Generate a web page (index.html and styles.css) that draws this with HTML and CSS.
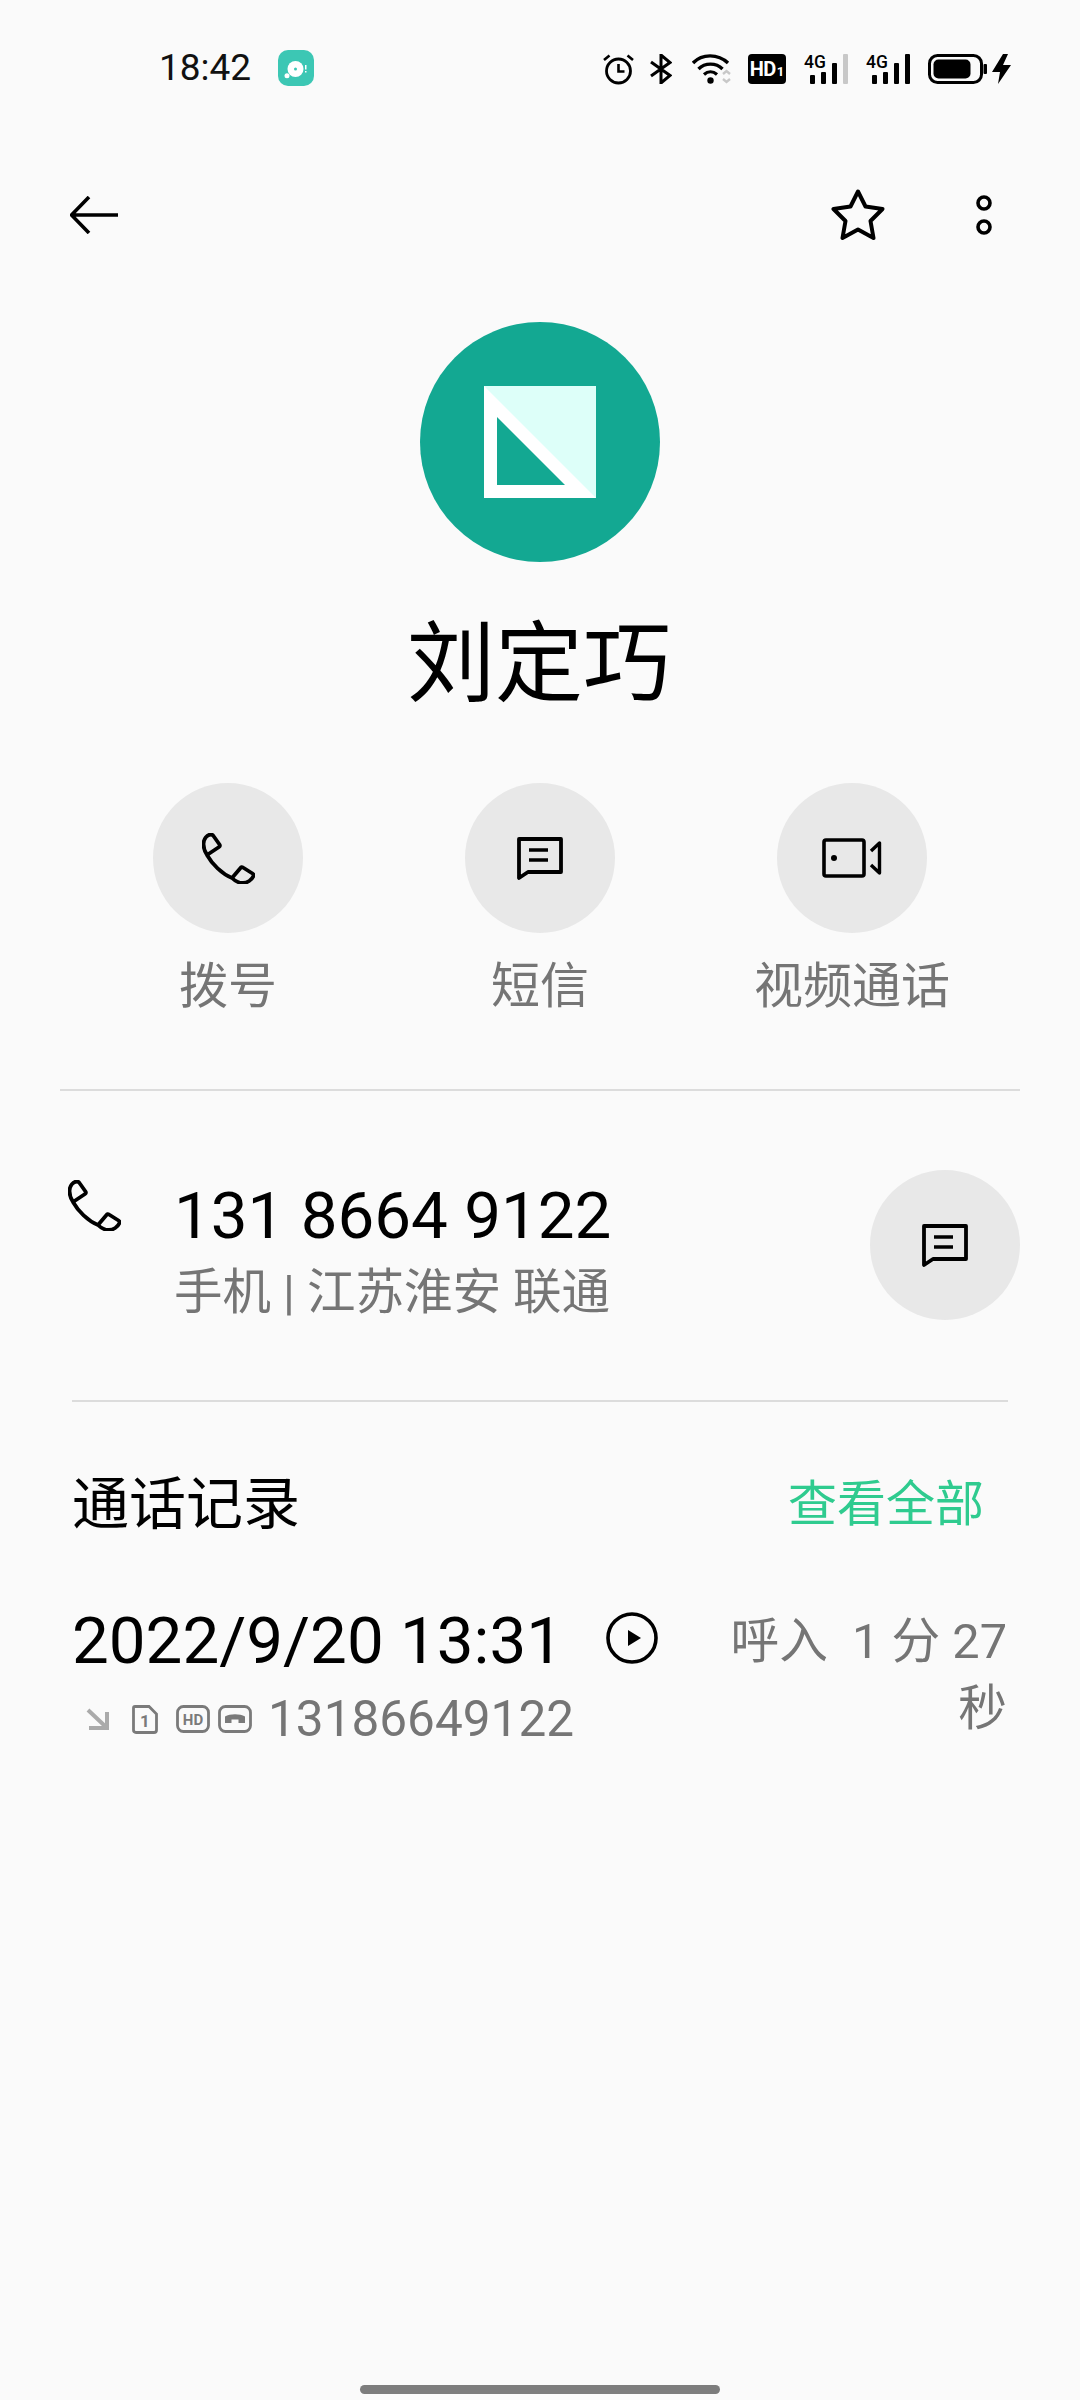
FILE: index.html
```html
<!DOCTYPE html>
<html lang="zh">
<head>
<meta charset="utf-8">
<title>刘定巧</title>
<link rel="stylesheet" href="styles.css">
</head>
<body>
<div class="page">
  <div class="statusbar">
    <span class="clock">18:42</span>
    <svg class="app-badge" viewBox="0 0 36 36"><rect width="36" height="36" rx="10" fill="#3cc7b4"/><circle cx="17.500" cy="19" r="8" fill="#fff"/><circle cx="17.500" cy="19" r="1.500" fill="#3cc7b4"/><circle cx="9" cy="25.700" r="2.500" fill="#fff"/><rect x="27" y="15" width="1.500" height="4.500" fill="#fff"/><rect x="27" y="21" width="1.500" height="1.500" fill="#fff"/></svg>
    <div class="status-icons">
      <svg class="si-alarm" viewBox="0 0 31 31"><circle cx="15.500" cy="17" r="12" fill="none" stroke="#000" stroke-width="2.800"/><path d="M15.500 10v7.500h6" fill="none" stroke="#000" stroke-width="2.600"/><path d="M1 6 6.500 1.500M30 6 24.500 1.500" fill="none" stroke="#000" stroke-width="2.600"/></svg>
      <svg class="si-bt" viewBox="0 0 22 30"><path d="M1 8 20 21.500 11 29V1l9 7.500L1 22" fill="none" stroke="#000" stroke-width="3"/></svg>
      <svg class="si-wifi" viewBox="0 0 40 30"><path d="M1 9C10-.5 26-.5 36 9" fill="none" stroke="#000" stroke-width="3.400"/><path d="M6.500 15C13 8.500 24 8.500 30.500 15" fill="none" stroke="#000" stroke-width="3.400"/><path d="M12 20.500C16 17 21 17 25 20.500" fill="none" stroke="#000" stroke-width="3.200"/><circle cx="18.500" cy="26.500" r="3.200" fill="#000"/><path d="M31 20l3.500-3 3.500 3M31 25l3.500 3 3.500-3" fill="none" stroke="#c8c8c8" stroke-width="2.400"/></svg>
      <div class="si-hd">
        <span class="si-hd-text">HD</span><span class="si-hd-sub">1</span>
      </div>
      <div class="si-sig">
        <span class="si-4g">4G</span>
        <svg class="si-bars" viewBox="0 0 44 30"><g fill="#000"><rect x="6" y="21" width="5" height="9" rx="1"/><rect x="17" y="18" width="5" height="12" rx="1"/><rect x="28" y="9" width="5" height="21" rx="1"/><rect x="39" y="0" width="5" height="30" rx="1" fill="#c8c8c8"/></g></svg>
      </div>
      <div class="si-sig">
        <span class="si-4g">4G</span>
        <svg class="si-bars" viewBox="0 0 44 30"><g fill="#000"><rect x="6" y="21" width="5" height="9" rx="1"/><rect x="17" y="18" width="5" height="12" rx="1"/><rect x="28" y="9" width="5" height="21" rx="1"/><rect x="39" y="0" width="5" height="30" rx="1"/></g></svg>
      </div>
      <svg class="si-batt" viewBox="0 0 59 30"><rect x="1.500" y="1.500" width="52" height="27" rx="8" fill="none" stroke="#000" stroke-width="3"/><rect x="5.500" y="5.500" width="37" height="19" rx="5" fill="#000"/><rect x="55.500" y="10" width="3.500" height="10" rx="1" fill="#000"/></svg>
      <svg class="si-bolt" viewBox="0 0 19 30"><path d="M11 0 0 18h8L6 30 19 11h-8l5-11z" fill="#000"/></svg>
    </div>
  </div>

  <div class="toolbar">
    <svg class="ic-back" viewBox="0 0 48 38"><path d="M19 1 1.500 19 19 37M2 19h46" fill="none" stroke="#000" stroke-width="3.600"/></svg>
    <svg class="ic-star" viewBox="0 0 54 52"><path d="M27 2.500 34.500 17.500 51.500 20 39.500 32 42.500 49 27 40.500 11.500 49 14.500 32 2.500 20 19.500 17.500Z" fill="none" stroke="#000" stroke-width="4" stroke-linejoin="round"/></svg>
    <svg class="ic-more" viewBox="0 0 16 40"><circle cx="8" cy="8" r="6" fill="none" stroke="#000" stroke-width="3.600"/><circle cx="8" cy="32" r="6" fill="none" stroke="#000" stroke-width="3.600"/></svg>
  </div>

  <div class="hero">
    <svg class="avatar" viewBox="0 0 240 240"><circle cx="120" cy="120" r="120" fill="#13a892"/><rect x="64" y="64" width="112" height="112" fill="#ddfff9"/><path d="M64 64 176 176H64Z" fill="#fff"/><path d="M77 95V163H145Z" fill="#13a892"/></svg>
    <div class="name">刘定巧</div>
  </div>

  <div class="actions">
    <div class="action">
      <div class="round-btn">
        <svg class="ic-phone" viewBox="0 0 53 51"><path d="M9 1.500C5 1.500 1.500 6 1.500 11 1.500 15 3 19 5 22L17 14Q18.500 13 17.500 11.500L11.500 3Q10.500 1.500 9 1.500ZM5 22C10 31 20 41 30 45M30 45 38.500 35Q39.500 33.500 41 34.500L50.500 40.500Q52 41.500 51.500 43C50 47 45 50 41 50 37 50 33 48 30 45Z" fill="none" stroke="#000" stroke-width="3.800" stroke-linejoin="round"/></svg>
      </div>
      <span class="action-label">拨号</span>
    </div>
    <div class="action">
      <div class="round-btn">
        <svg class="ic-msg" viewBox="0 0 46 43"><path d="M2 2H44V35H11L2 41Z" fill="none" stroke="#000" stroke-width="3.800" stroke-linejoin="round"/><path d="M12 13H31M12 23H31" fill="none" stroke="#000" stroke-width="3.600"/></svg>
      </div>
      <span class="action-label">短信</span>
    </div>
    <div class="action">
      <div class="round-btn">
        <svg class="ic-video" viewBox="0 0 60 40"><rect x="2" y="2" width="40" height="36" rx="2" fill="none" stroke="#000" stroke-width="3.600"/><circle cx="12" cy="20" r="3" fill="#000"/><path d="M49 13 57.500 5V35L49 27" fill="none" stroke="#000" stroke-width="3.400" stroke-linejoin="round"/></svg>
      </div>
      <span class="action-label">视频通话</span>
    </div>
  </div>

  <div class="divider divider-wide"></div>

  <div class="contact">
    <svg class="ic-phone contact-phone" viewBox="0 0 53 51"><path d="M9 1.500C5 1.500 1.500 6 1.500 11 1.500 15 3 19 5 22L17 14Q18.500 13 17.500 11.500L11.500 3Q10.500 1.500 9 1.500ZM5 22C10 31 20 41 30 45M30 45 38.500 35Q39.500 33.500 41 34.500L50.500 40.500Q52 41.500 51.500 43C50 47 45 50 41 50 37 50 33 48 30 45Z" fill="none" stroke="#000" stroke-width="3.800" stroke-linejoin="round"/></svg>
    <div class="contact-text">
      <div class="number">131 8664 9122</div>
      <div class="number-sub">手机 | 江苏淮安 联通</div>
    </div>
    <div class="round-btn">
      <svg class="ic-msg" viewBox="0 0 46 43"><path d="M2 2H44V35H11L2 41Z" fill="none" stroke="#000" stroke-width="3.800" stroke-linejoin="round"/><path d="M12 13H31M12 23H31" fill="none" stroke="#000" stroke-width="3.600"/></svg>
    </div>
  </div>

  <div class="divider divider-narrow"></div>

  <div class="log-head">
    <span class="log-title">通话记录</span>
    <span class="log-all">查看全部</span>
  </div>

  <div class="log-row">
    <div class="log-main">
      <div class="log-date-line">
        <span class="log-date">2022/9/20 13:31</span>
        <svg class="ic-play" viewBox="0 0 52 52"><circle cx="26" cy="26" r="24" fill="none" stroke="#000" stroke-width="3.600"/><path d="M22 18V34L35 26Z" fill="#000"/></svg>
      </div>
      <div class="log-sub">
        <svg class="ic-in" viewBox="0 0 23 22"><path d="M2 2 20 19M23 20H3M21 22V4" fill="none" stroke="#aaa" stroke-width="4"/></svg>
        <svg class="ic-sim" viewBox="0 0 26 29"><path d="M3 1.500H17L24.500 9V25Q24.500 27.500 22 27.500H4Q1.500 27.500 1.500 25V3Q1.500 1.500 3 1.500Z" fill="none" stroke="#7a7a7a" stroke-width="2.800"/><text class="ic-sim-text" x="13" y="21.500">1</text></svg>
        <svg class="ic-hd" viewBox="0 0 34 28"><rect x="1.500" y="1.500" width="31" height="25" rx="6" fill="none" stroke="#7a7a7a" stroke-width="2.800"/><text class="ic-hd-text" x="17" y="19.500">HD</text></svg>
        <svg class="ic-hangup" viewBox="0 0 34 28"><rect x="1.500" y="1.500" width="31" height="25" rx="6" fill="none" stroke="#7a7a7a" stroke-width="2.800"/><path d="M7 18V11.500C12 8.500 22 8.500 27 11.500V18H20.500V14.500H13.500V18Z" fill="#7a7a7a"/></svg>
        <span class="log-number">13186649122</span>
      </div>
    </div>
    <div class="log-info">呼入&nbsp;&nbsp;1 分 27 秒</div>
  </div>

  <div class="spacer"></div>
  <div class="home-bar"></div>
</div>
</body>
</html>
```

FILE: styles.css
```css
* { box-sizing: border-box; }
html, body { margin: 0; padding: 0; }
body {
  background: #fafafa;
  font-family: Roboto, "Noto Sans CJK SC", sans-serif;
  color: #000;
}
.page {
  width: 1080px;
  height: 2400px;
  display: flex;
  flex-direction: column;
  background: #fafafa;
  overflow: hidden;
}
svg { display: block; flex: none; }

/* status bar */
.statusbar {
  height: 136px;
  flex: none;
  display: flex;
  align-items: center;
  padding: 2px 69px 0 159px;
}
.clock { font-size: 37px; line-height: 48px; width: 119px; color: #111; margin-top: -2px; }
.app-badge { width: 36px; height: 36px; margin-top: -2px; }
.status-icons { margin-left: auto; display: flex; align-items: center; }
.si-alarm { width: 31px; height: 31px; margin-right: 16px; }
.si-bt { width: 22px; height: 30px; margin-right: 20px; }
.si-wifi { width: 40px; height: 30px; margin-right: 16px; }
.si-hd {
  width: 38px;
  height: 30px;
  margin-right: 18px;
  border-radius: 4px;
  background: #000;
  color: #fff;
  display: flex;
  align-items: baseline;
  justify-content: center;
  font-weight: 700;
  line-height: 30px;
}
.si-hd-text { font-size: 20px; letter-spacing: -0.5px; }
.si-hd-sub { font-size: 13px; margin-left: 1px; }
.si-sig { position: relative; width: 44px; height: 30px; margin-right: 18px; }
.si-bars { width: 44px; height: 30px; }
.si-4g {
  position: absolute;
  left: 0;
  top: 0;
  font-size: 19px;
  font-weight: 500;
  line-height: 15px;
  transform: scaleX(0.92);
  transform-origin: left top;
}
.si-batt { width: 59px; height: 30px; margin-right: 5px; }
.si-bolt { width: 19px; height: 30px; }

/* toolbar */
.toolbar {
  height: 158px;
  flex: none;
  display: flex;
  align-items: center;
  padding: 0 88px 0 70px;
}
.ic-back { width: 48px; height: 38px; }
.ic-star { width: 54px; height: 52px; margin-left: auto; }
.ic-more { width: 16px; height: 40px; margin-left: 91px; }

/* hero */
.hero {
  flex: none;
  margin-top: 28px;
  display: flex;
  flex-direction: column;
  align-items: center;
}
.avatar { width: 240px; height: 240px; }
.name {
  margin-top: 42px;
  padding-right: 2px;
  font-size: 88px;
  line-height: 120px;
  font-weight: 400;
}

/* actions */
.actions {
  flex: none;
  margin-top: 59px;
  padding: 0 72px;
  display: grid;
  grid-template-columns: repeat(3, 312px);
}
.action { display: flex; flex-direction: column; align-items: center; }
.action-label {
  margin-top: 20px;
  font-size: 49px;
  line-height: 68px;
  color: #757575;
}
.round-btn {
  width: 150px;
  height: 150px;
  flex: none;
  border-radius: 50%;
  background: #e8e8e8;
  display: flex;
  align-items: center;
  justify-content: center;
}
.ic-phone { width: 53px; height: 51px; }
.ic-msg { width: 46px; height: 43px; }
.ic-video { width: 60px; height: 40px; }

/* dividers */
.divider { height: 2px; flex: none; background: #dcdcdc; }
.divider-wide { margin: 68px 60px 0 60px; }
.divider-narrow { margin: 75px 72px 0 72px; }

/* contact */
.contact {
  flex: none;
  display: flex;
  align-items: flex-start;
  padding: 79px 60px 0 68px;
}
.contact-phone { margin-top: 10px; }
.contact-text { margin: 1px 0 0 53px; flex: 1; }
.number { font-size: 65.500px; line-height: 90px; }
.number-sub { font-size: 48.500px; line-height: 64px; color: #757575; }

/* call log */
.log-head {
  flex: none;
  margin-top: 47px;
  height: 100px;
  display: flex;
  align-items: center;
  justify-content: space-between;
  padding: 0 96px 0 72px;
}
.log-title { font-size: 57px; }
.log-all { font-size: 49px; color: #2fcb8f; }
.log-row {
  flex: none;
  margin-top: 47px;
  display: flex;
  align-items: flex-start;
  justify-content: space-between;
  padding: 0 73px 0 72px;
}
.log-date-line { display: flex; align-items: center; height: 90px; }
.log-date { font-size: 65.500px; line-height: 90px; }
.ic-play { width: 52px; height: 52px; margin: 0 0 6px 43px; }
.log-sub { display: flex; align-items: center; height: 60px; margin-top: 3px; padding-left: 14px; }
.ic-in { width: 23px; height: 22px; }
.ic-sim { width: 26px; height: 29px; margin-left: 23px; }
.ic-hd { width: 34px; height: 28px; margin-left: 18px; }
.ic-hangup { width: 34px; height: 28px; margin-left: 8px; }
.ic-sim-text { font: 700 17px Roboto, sans-serif; fill: #7a7a7a; text-anchor: middle; }
.ic-hd-text { font: 700 15px Roboto, sans-serif; fill: #7a7a7a; text-anchor: middle; }
.log-number { font-size: 49.500px; line-height: 60px; color: #757575; margin-left: 16px; }
.log-info {
  width: 290px;
  margin-top: 12px;
  font-size: 48.700px;
  line-height: 67px;
  color: #757575;
  text-align: right;
}

.spacer { flex: 1; }
.home-bar {
  flex: none;
  width: 360px;
  height: 9px;
  margin: 0 auto 6px;
  border-radius: 5px;
  background: #7d7d7d;
}
```
